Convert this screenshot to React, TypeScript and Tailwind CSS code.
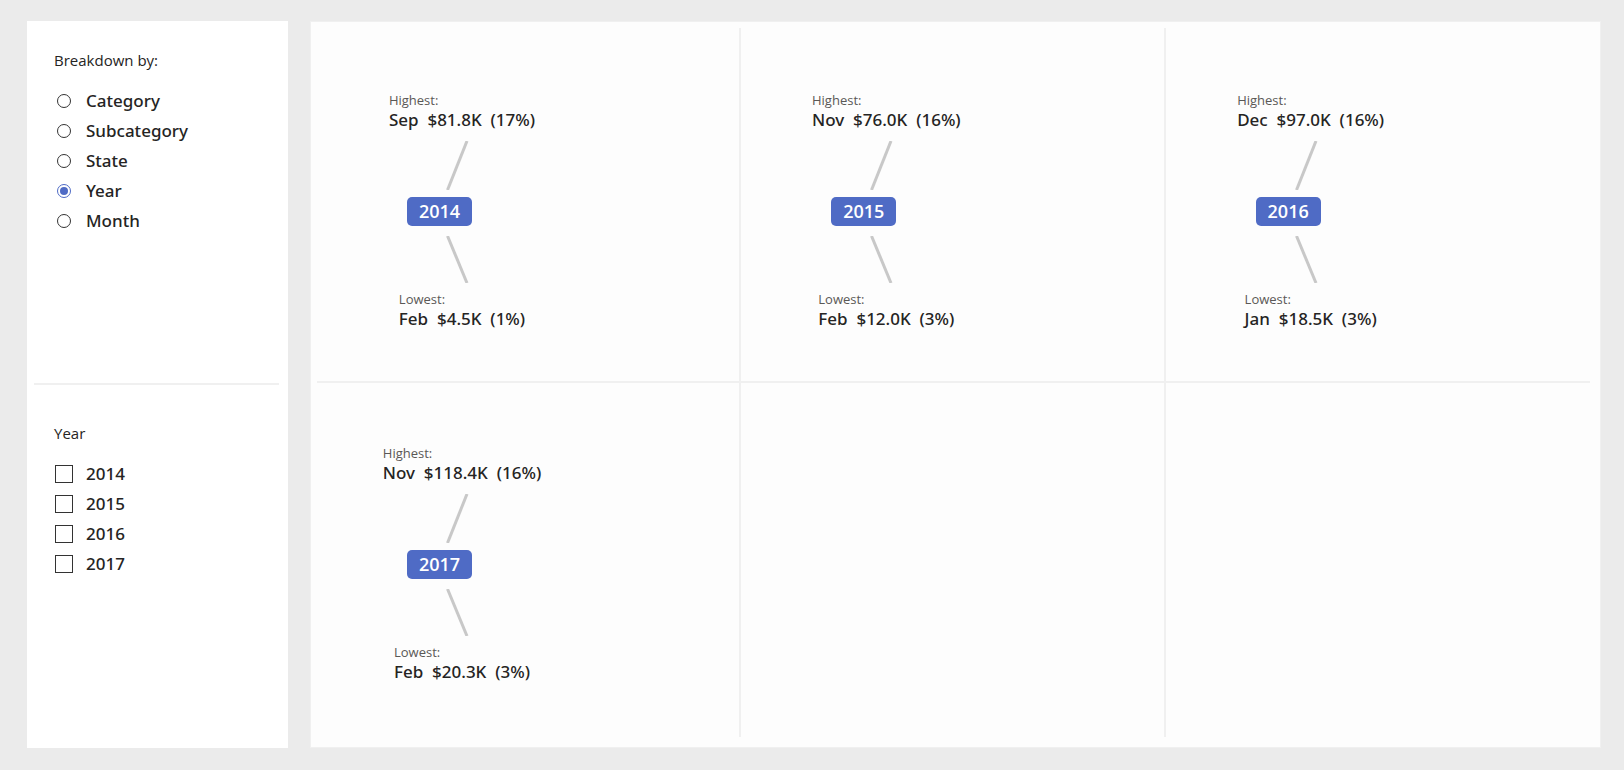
import React from 'react';

const font = "font-['Open_Sans',sans-serif]";
const medium = "font-['Noto_Sans',sans-serif] font-medium";

interface YearStat {
  year: string;
  high: string;
  low: string;
}

const stats: YearStat[] = [
  { year: '2014', high: 'Sep  $81.8K  (17%)', low: 'Feb  $4.5K  (1%)' },
  { year: '2015', high: 'Nov  $76.0K  (16%)', low: 'Feb  $12.0K  (3%)' },
  { year: '2016', high: 'Dec  $97.0K  (16%)', low: 'Jan  $18.5K  (3%)' },
  { year: '2017', high: 'Nov  $118.4K  (16%)', low: 'Feb  $20.3K  (3%)' },
];

const breakdown = ['Category', 'Subcategory', 'State', 'Year', 'Month'];
const years = ['2014', '2015', '2016', '2017'];

const Radio: React.FC<{ checked?: boolean }> = ({ checked }) =>
  checked ? (
    <span className="w-[14px] h-[14px] rounded-full border border-[#4f6bc5] flex items-center justify-center">
      <span className="w-[8px] h-[8px] rounded-full bg-[#4f6bc5]" />
    </span>
  ) : (
    <span className="w-[14px] h-[14px] rounded-full border border-[#333333]" />
  );

const StatBlock: React.FC<{ label: string; value: string }> = ({ label, value }) => (
  <div className="self-center flex flex-col">
    <span className="text-[13px] leading-[18px] text-[#5a5856]">{label}</span>
    <span className={`${medium} text-[17px] leading-[22px] text-[#252423] whitespace-pre`}>{value}</span>
  </div>
);

const Cell: React.FC<{ stat?: YearStat; top: boolean; last: boolean }> = ({ stat, top, last }) => (
  <div className={`${last ? '' : 'border-r-2'} ${top ? 'border-b-2 pt-[63px]' : 'pt-[61px]'} border-[#f0f0f0]`}>
    {stat && (
      <div className="w-[290px] flex flex-col">
        <StatBlock label="Highest:" value={stat.high} />
        {/* connector up */}
        <svg className="mt-[10px]" width="290" height="49">
          <line x1="150" y1="0" x2="130.5" y2="49" stroke="#c8c8c8" strokeWidth="3" />
        </svg>
        <div className="mt-[7px] ml-[90px] w-[65px] h-[29px] rounded-[5px] bg-[#4f6bc5] text-white text-[18px] font-semibold leading-[29px] text-center">
          {stat.year}
        </div>
        <svg className="mt-[10px]" width="290" height="47">
          <line x1="130.5" y1="0" x2="150" y2="47" stroke="#c8c8c8" strokeWidth="3" />
        </svg>
        <div className="mt-[7px] self-center">
          <StatBlock label="Lowest:" value={stat.low} />
        </div>
      </div>
    )}
  </div>
);

export default function App() {
  return (
    <div className={`${font} w-[1624px] h-[770px] bg-[#ebebeb] flex gap-[22px] pl-[27px] pt-[21px]`}>
      {/* slicers */}
      <div className="w-[261px] h-[727px] bg-white flex flex-col text-[#252423]">
        <div className="h-[362px] pl-[27px] pt-[29px]">
          <div className="text-[15px] leading-[20px]">Breakdown by:</div>
          <div className="mt-[16px] ml-[3px] flex flex-col">
            {breakdown.map((b) => (
              <div key={b} className="h-[30px] flex items-center gap-[15px]">
                <Radio checked={b === 'Year'} />
                <span className={`${medium} text-[17px] leading-[30px]`}>{b}</span>
              </div>
            ))}
          </div>
        </div>
        <div className="ml-[7px] mr-[9px] h-[2px] bg-[#f0f0f0]" />
        <div className="pl-[27px] pt-[38px]">
          <div className="text-[15px] leading-[20px]">Year</div>
          <div className="mt-[16px] ml-[1px] flex flex-col">
            {years.map((y) => (
              <div key={y} className="h-[30px] flex items-center gap-[13px]">
                <span className="w-[18px] h-[18px] border-[1.5px] border-[#333333]" />
                <span className={`${medium} text-[17px] leading-[30px]`}>{y}</span>
              </div>
            ))}
          </div>
        </div>
      </div>

      {/* small multiples */}
      <div className="w-[1291px] h-[727px] bg-[#fdfdfd] border border-[#f0f0f0] pt-[6px] pl-[6px]">
        <div className="w-[1273px] h-[709px] grid grid-cols-3 grid-rows-2">
          {[0, 1, 2, 3, 4, 5].map((i) => (
            <Cell key={i} stat={stats[i]} top={i < 3} last={i % 3 === 2} />
          ))}
        </div>
      </div>
    </div>
  );
}
